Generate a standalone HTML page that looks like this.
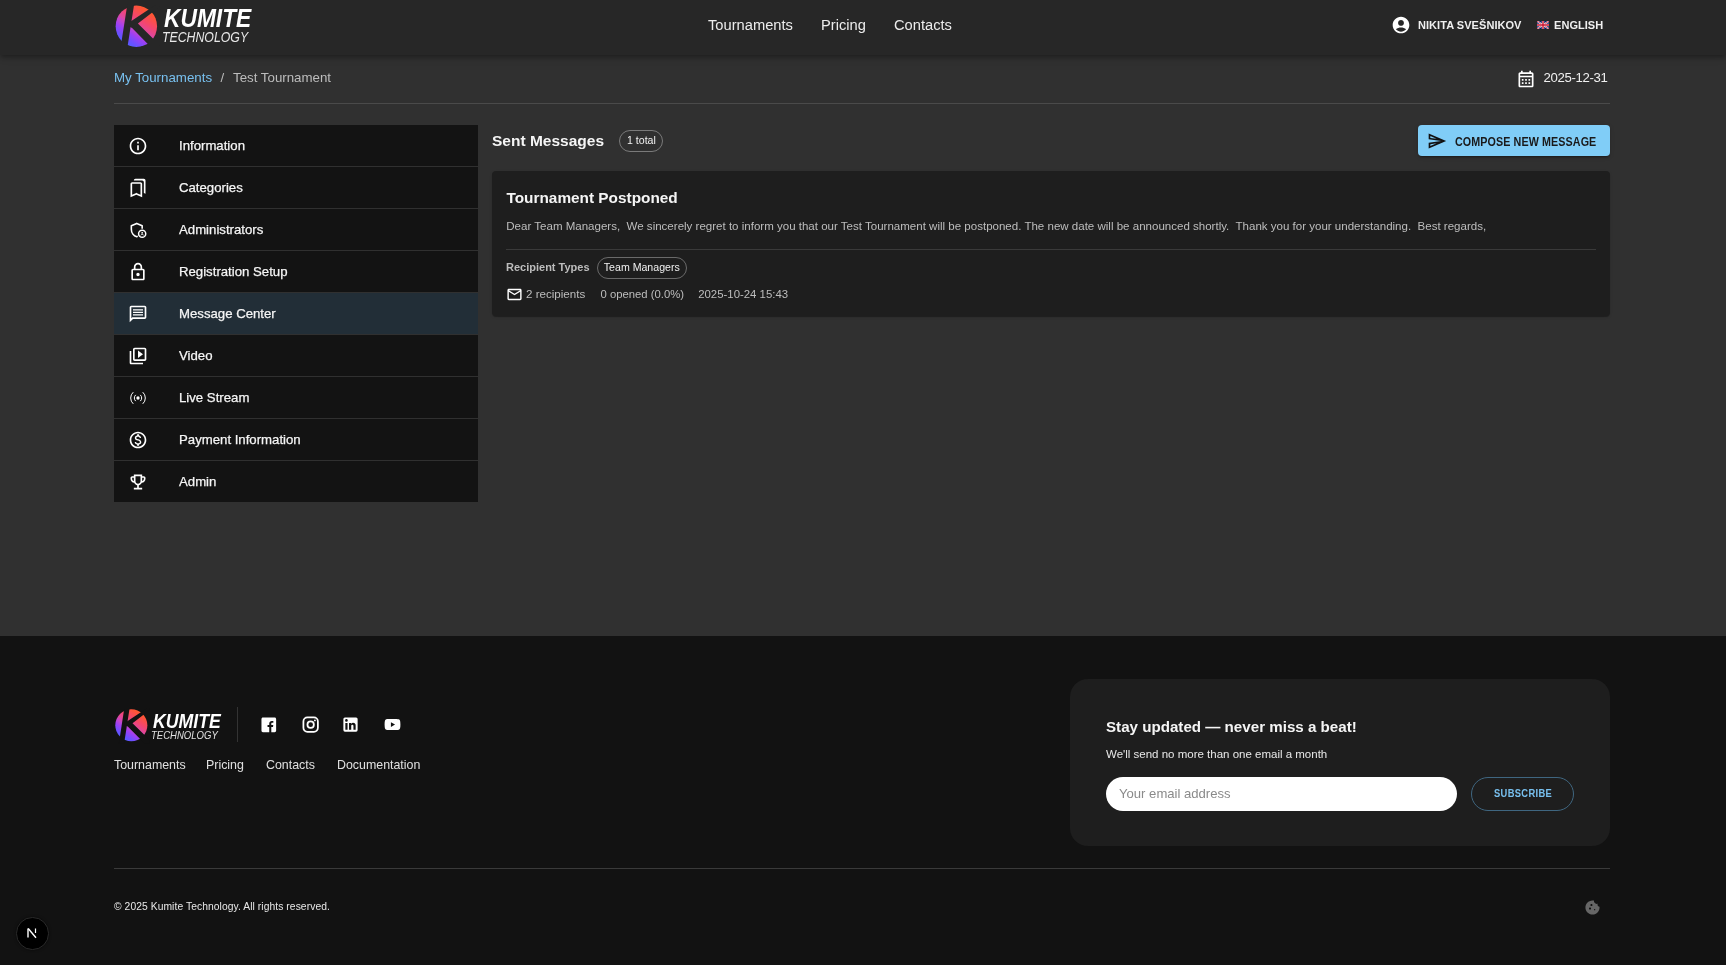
<!DOCTYPE html>
<html><head><meta charset="utf-8">
<style>
*{box-sizing:border-box;margin:0;padding:0}
html,body{width:1726px;height:965px;overflow:hidden;background:#121212;-webkit-font-smoothing:antialiased;font-family:"Liberation Sans",sans-serif;color:#fff}
.abs{position:absolute;white-space:nowrap;line-height:1}
#header{will-change:transform;position:absolute;left:0;top:0;width:1726px;height:55px;background:#272727;box-shadow:0 2px 4px -1px rgba(0,0,0,.2),0 4px 5px 0 rgba(0,0,0,.14),0 1px 10px 0 rgba(0,0,0,.12);z-index:2}
#mainbg{position:absolute;left:0;top:55px;width:1726px;height:581px;background:#303030}
#main{will-change:transform;position:absolute;left:0;top:56px;width:1726px;height:580px}
#footer{will-change:transform;position:absolute;left:0;top:636px;width:1726px;height:329px;background:#121212}
.nav{position:absolute;top:17.7px;font-size:14.7px;color:#ececec;white-space:nowrap;line-height:1}
.up{font-size:11px;font-weight:bold;letter-spacing:.05px;color:#f0f0f0}
.side{position:absolute;left:114px;top:69px;width:364px}
.item{position:relative;height:41px;background:#131313;margin-bottom:1px}
.item.act{background:#222e37}
.item svg{position:absolute;left:128px;top:11px}
.item .t{position:absolute;left:65px;top:14px;font-size:13.2px;color:#f5f5f5;-webkit-text-stroke:.25px #f5f5f5;line-height:1;white-space:nowrap}
.ic{fill:#fff}
</style></head><body>
<div id="header">
  <svg class="abs" style="left:114px;top:4px" width="46" height="46" viewBox="114 4 46 46">
    <defs><linearGradient id="lg1" gradientUnits="userSpaceOnUse" x1="148" y1="8" x2="121.85" y2="47.2"><stop offset="0" stop-color="#ff5a2e"/><stop offset="0.08" stop-color="#ff5535"/><stop offset="0.3" stop-color="#f4466e"/><stop offset="0.45" stop-color="#e0479e"/><stop offset="0.55" stop-color="#c046d0"/><stop offset="0.65" stop-color="#9c40f5"/><stop offset="0.8" stop-color="#6a50ff"/><stop offset="1" stop-color="#3f6cff"/></linearGradient></defs>
    <circle cx="136.35" cy="26.25" r="20.7" fill="url(#lg1)"/>
    <polygon points="128,0 134.8,0 127,50 120.2,50" fill="#272727"/>
    <polygon points="128,23 132.1,20.4 160,2 160,6.6 137.9,23.6 160,45.4 160,56.4 132.1,28.1 128,26" fill="#272727"/>
  </svg>
  <div class="abs" style="left:164px;top:6px;font-size:25.6px;font-weight:bold;font-style:italic;color:#fff;transform:scaleX(.89);transform-origin:0 0">KUMITE</div>
  <div class="abs" style="left:162px;top:30px;font-size:14.3px;font-style:italic;color:#e8e8e8;transform:scaleX(.86);transform-origin:0 0">TECHNOLOGY</div>
  <div class="nav" style="left:708px">Tournaments</div>
  <div class="nav" style="left:821px">Pricing</div>
  <div class="nav" style="left:894px">Contacts</div>
  <svg class="abs" style="left:1390.6px;top:15.4px" width="20" height="20" viewBox="0 0 24 24"><path class="ic" d="M12 2C6.48 2 2 6.48 2 12s4.48 10 10 10 10-4.48 10-10S17.52 2 12 2zm0 4c1.93 0 3.5 1.57 3.5 3.5S13.93 13 12 13s-3.5-1.57-3.5-3.5S10.07 6 12 6zm0 14c-2.03 0-4.43-.82-6.14-2.88C7.55 15.8 9.68 15 12 15s4.45.8 6.14 2.12C16.43 19.18 14.03 20 12 20z"/></svg>
  <div class="abs up" style="left:1418px;top:19.6px">NIKITA SVEŠNIKOV</div>
  <svg class="abs" style="left:1537px;top:20.7px" width="12" height="8" viewBox="0 0 60 40">
    <rect width="60" height="40" fill="#012169"/>
    <path d="M0,0 L60,40 M60,0 L0,40" stroke="#fff" stroke-width="8"/>
    <path d="M0,0 L60,40 M60,0 L0,40" stroke="#C8102E" stroke-width="4"/>
    <path d="M30,0 V40 M0,20 H60" stroke="#fff" stroke-width="12"/>
    <path d="M30,0 V40 M0,20 H60" stroke="#C8102E" stroke-width="7"/>
  </svg>
  <div class="abs up" style="left:1554px;top:19.6px">ENGLISH</div>
</div>
<div id="mainbg"></div>
<div id="main">
  <div class="abs" style="left:114px;top:15.3px;font-size:13.3px;color:#78c0ef">My Tournaments</div>
  <div class="abs" style="left:220.5px;top:15.3px;font-size:13.3px;color:#bdbdbd">/</div>
  <div class="abs" style="left:233px;top:15.3px;font-size:13.3px;color:#bdbdbd">Test Tournament</div>
  <svg class="abs" style="left:1516px;top:12.5px" width="20" height="20" viewBox="0 0 24 24"><path class="ic" d="M19 4h-1V2h-2v2H8V2H6v2H5c-1.11 0-1.99.9-1.99 2L3 20c0 1.1.89 2 2 2h14c1.1 0 2-.9 2-2V6c0-1.1-.9-2-2-2zm0 16H5V10h14v10zm0-12H5V6h14v2zM9 14H7v-2h2v2zm4 0h-2v-2h2v2zm4 0h-2v-2h2v2zm-8 4H7v-2h2v2zm4 0h-2v-2h2v2zm4 0h-2v-2h2v2z"/></svg>
  <div class="abs" style="left:1543.5px;top:15.2px;font-size:13.2px;letter-spacing:-.35px;color:#f0f0f0">2025-12-31</div>
  <div class="abs" style="left:114px;top:47px;width:1496px;height:1px;background:#4a4a4a"></div>
  <div class="side">
    <div class="item"><svg width="20" height="20" viewBox="0 0 24 24" style="left:14px;top:11px"><path class="ic" d="M11 7h2v2h-2zm0 4h2v6h-2zm1-9C6.48 2 2 6.48 2 12s4.48 10 10 10 10-4.48 10-10S17.52 2 12 2zm0 18c-4.41 0-8-3.590-8-8s3.59-8 8-8 8 3.59 8 8-3.59 8-8 8z"/></svg><div class="t">Information</div></div>
    <div class="item"><svg width="20" height="20" viewBox="0 0 24 24" style="left:14px;top:11px"><path class="ic" d="M19 18l2 1V3c0-1.1-.9-2-2-2H8.99C7.89 1 7 1.9 7 3h10c1.1 0 2 .9 2 2v13zM15 5H5c-1.1 0-2 .9-2 2v16l7-3 7 3V7c0-1.1-.9-2-2-2zm0 14.97l-4.21-1.81-.79-.34-.79.34L5 19.97V7h10v12.97z"/></svg><div class="t">Categories</div></div>
    <div class="item"><svg width="20" height="20" viewBox="0 0 24 24" style="left:14px;top:11px"><path d="M17 10.6V6.9L10.5 4.1 4 6.9v4.3c0 4.1 2.8 7.9 6.5 8.8.4-.1.8-.25 1.2-.4" fill="none" stroke="#fff" stroke-width="1.9" stroke-linejoin="round"/><circle cx="17" cy="16.5" r="4.3" fill="none" stroke="#fff" stroke-width="1.8"/><circle cx="17" cy="15.4" r="1.1" fill="#fff"/><path d="M15.1 18.3c.4-.7 1.1-1 1.9-1s1.5.3 1.9 1" fill="none" stroke="#fff" stroke-width="1"/></svg><div class="t">Administrators</div></div>
    <div class="item"><svg width="20" height="20" viewBox="0 0 24 24" style="left:14px;top:11px"><path class="ic" d="M18 8h-1V6c0-2.76-2.24-5-5-5S7 3.24 7 6v2H6c-1.1 0-2 .9-2 2v10c0 1.1.9 2 2 2h12c1.1 0 2-.9 2-2V10c0-1.1-.9-2-2-2zM9 6c0-1.66 1.34-3 3-3s3 1.34 3 3v2H9V6zm9 14H6V10h12v10zm-6-3c1.1 0 2-.9 2-2s-.9-2-2-2-2 .9-2 2 .9 2 2 2z"/></svg><div class="t">Registration Setup</div></div>
    <div class="item act"><svg width="20" height="20" viewBox="0 0 24 24" style="left:14px;top:11px"><path class="ic" d="M20 2H4c-1.1 0-1.99.9-1.99 2L2 22l4-4h14c1.1 0 2-.9 2-2V4c0-1.1-.9-2-2-2zm0 14H5.17L4 17.17V4h16v12zM6 12.2h12v1.6H6zm0-3h12v1.6H6zm0-3h12v1.6H6z"/></svg><div class="t">Message Center</div></div>
    <div class="item"><svg width="20" height="20" viewBox="0 0 24 24" style="left:14px;top:11px"><path class="ic" d="M4 6H2v14c0 1.1.9 2 2 2h14v-2H4V6zm16-4H8c-1.1 0-2 .9-2 2v12c0 1.1.9 2 2 2h12c1.1 0 2-.9 2-2V4c0-1.1-.9-2-2-2zm0 14H8V4h12v12zM12 5.5v9l6-4.5z"/></svg><div class="t">Video</div></div>
    <div class="item"><svg width="20" height="20" viewBox="0 0 24 24" style="left:14px;top:11px"><path d="M15.08 8.58A4.6 4.6 0 0 1 15.08 15.42 M8.92 8.58A4.6 4.6 0 0 0 8.92 15.42 M18.02 5.31A9.0 9.0 0 0 1 18.02 18.69 M5.98 5.31A9.0 9.0 0 0 0 5.98 18.69" fill="none" stroke="#fff" stroke-width="1.2" stroke-linecap="round"/><circle cx="12" cy="12" r="2" fill="#fff"/></svg><div class="t">Live Stream</div></div>
    <div class="item"><svg width="20" height="20" viewBox="0 0 24 24" style="left:14px;top:11px"><path class="ic" d="M12 2C6.48 2 2 6.48 2 12s4.48 10 10 10 10-4.48 10-10S17.52 2 12 2zm0 18c-4.41 0-8-3.59-8-8s3.59-8 8-8 8 3.59 8 8-3.59 8-8 8zm.31-8.86c-1.77-.45-2.34-.94-2.34-1.67 0-.84.79-1.43 2.1-1.430 1.38 0 1.9.66 1.94 1.64h1.71c-.05-1.34-.87-2.57-2.49-2.97V5H10.9v1.69c-1.51.32-2.72 1.3-2.72 2.810 0 1.79 1.49 2.69 3.66 3.21 1.950.46 2.34 1.15 2.34 1.870 0 .53-.39 1.39-2.1 1.39-1.6 0-2.23-.72-2.32-1.64H8.04c.1 1.7 1.36 2.66 2.86 2.97V19h2.34v-1.67c1.52-.29 2.72-1.16 2.73-2.77-.01-2.2-1.9-2.96-3.66-3.42z"/></svg><div class="t">Payment Information</div></div>
    <div class="item" style="margin-bottom:0"><svg width="20" height="20" viewBox="0 0 24 24" style="left:14px;top:11px"><path class="ic" d="M19 5h-2V3H7v2H5c-1.1 0-2 .9-2 2v1c0 2.55 1.92 4.63 4.39 4.94.63 1.5 1.98 2.63 3.61 2.96V19H7v2h10v-2h-4v-3.1c1.63-.33 2.98-1.46 3.61-2.96C19.08 12.63 21 10.55 21 8V7c0-1.1-.9-2-2-2zM5 8V7h2v3.82C5.840 10.4 5 9.3 5 8zm7 6c-1.65 0-3-1.35-3-3V5h6v6c0 1.65-1.35 3-3 3zm7-6c0 1.3-.84 2.4-2 2.82V7h2v1z"/></svg><div class="t">Admin</div></div>
  </div>
  <div class="abs" style="left:492px;top:77.2px;font-size:15.5px;font-weight:bold;color:#f5f5f5">Sent Messages</div>
  <div class="abs" style="left:619px;top:74px;width:44px;height:21.5px;border:1px solid #7a7a7a;border-radius:11px"></div>
  <div class="abs" style="left:627px;top:79.2px;font-size:10.6px;color:#f0f0f0">1 total</div>
  <div class="abs" style="left:1418px;top:69px;width:192px;height:31px;background:#80cdf7;border-radius:4px;box-shadow:0 3px 1px -2px rgba(0,0,0,.2),0 2px 2px 0 rgba(0,0,0,.14),0 1px 5px 0 rgba(0,0,0,.12)">
    <svg class="abs" style="left:9px;top:6px" width="20" height="20" viewBox="0 0 24 24"><path fill="#111" d="M4.01 6.03l7.51 3.22-7.52-1 .01-2.22m7.5 8.72L4 17.97v-2.22l7.51-1M2.01 3L2 10l15 2-15 2 .01 7L23 12 2.01 3z"/></svg>
    <div class="abs" style="left:36.7px;top:10.5px;font-size:12px;font-weight:bold;letter-spacing:.1px;color:#1a1a1a;transform:scaleX(.895);transform-origin:0 0">COMPOSE NEW MESSAGE</div>
  </div>
  <div class="abs" style="left:492px;top:115px;width:1118px;height:145px;background:#1e1e1e;border-radius:4px;box-shadow:0 2px 1px -1px rgba(0,0,0,.2),0 1px 1px 0 rgba(0,0,0,.14),0 1px 3px 0 rgba(0,0,0,.12)">
    <div class="abs" style="left:14.5px;top:19.2px;font-size:15.36px;font-weight:bold;color:#f5f5f5">Tournament Postponed</div>
    <div class="abs" style="left:14.3px;top:49.8px;font-size:11.54px;color:#bdbdbd">Dear Team Managers,&nbsp; We sincerely regret to inform you that our Test Tournament will be postponed. The new date will be announced shortly.&nbsp; Thank you for your understanding.&nbsp; Best regards,</div>
    <div class="abs" style="left:14px;top:77.5px;width:1090px;height:1px;background:#3a3a3a"></div>
    <div class="abs" style="left:14px;top:91px;font-size:11px;font-weight:bold;color:#bdbdbd">Recipient Types</div>
    <div class="abs" style="left:105px;top:86px;width:89.7px;height:22px;border:1px solid #6a6a6a;border-radius:11px"></div>
    <div class="abs" style="left:111.8px;top:91.2px;font-size:10.6px;color:#f0f0f0">Team Managers</div>
    <svg class="abs" style="left:13.5px;top:114.8px" width="17" height="17" viewBox="0 0 24 24"><path class="ic" d="M20 4H4c-1.1 0-1.99.9-1.99 2L2 18c0 1.1.9 2 2 2h16c1.1 0 2-.9 2-2V6c0-1.1-.9-2-2-2zm0 14H4V8l8 5 8-5v10zm-8-7L4 6h16l-8 5z"/></svg>
    <div class="abs" style="left:34px;top:117.2px;font-size:11.6px;color:#bdbdbd">2 recipients</div>
    <div class="abs" style="left:108.5px;top:117.8px;font-size:11.3px;color:#bdbdbd">0 opened (0.0%)</div>
    <div class="abs" style="left:206.2px;top:117.8px;font-size:11.4px;color:#bdbdbd">2025-10-24 15:43</div>
  </div>
</div>
<div id="footer">
  <svg class="abs" style="left:114px;top:72px;width:46px;height:46px;transform:scale(.775);transform-origin:0 0" width="46" height="46" viewBox="114 4 46 46">
    <circle cx="136.35" cy="26.25" r="20.7" fill="url(#lg1)"/>
    <polygon points="128,0 134.8,0 127,50 120.2,50" fill="#121212"/>
    <polygon points="128,23 132.1,20.4 160,2 160,6.6 137.9,23.6 160,45.4 160,56.4 132.1,28.1 128,26" fill="#121212"/>
  </svg>
  <div class="abs" style="left:153px;top:76px;font-size:19.9px;font-weight:bold;font-style:italic;color:#fff;transform:scaleX(.89);transform-origin:0 0">KUMITE</div>
  <div class="abs" style="left:151px;top:94px;font-size:11.1px;font-style:italic;color:#e0e0e0;transform:scaleX(.86);transform-origin:0 0">TECHNOLOGY</div>
  <div class="abs" style="left:236.5px;top:71px;width:1px;height:35px;background:#333"></div>
  <svg class="abs" style="left:259.9px;top:79.7px" width="17.6" height="17.6" viewBox="0 0 24 24"><path class="ic" d="M20 2H4c-1.1 0-2 .9-2 2v16c0 1.1.9 2 2 2h8.61v-6.97h-2.34V12.3h2.34v-2c0-2.33 1.42-3.6 3.5-3.6.7 0 1.39.04 2.09.11v2.42h-1.43c-1.13 0-1.35.53-1.35 1.32v1.73h2.69l-.35 2.73h-2.34V22H20c1.1 0 2-.9 2-2V4c0-1.1-.9-2-2-2z"/></svg>
  <svg class="abs" style="left:300.7px;top:79.3px" width="19.3" height="19.3" viewBox="0 0 24 24"><rect x="3" y="3" width="18" height="18" rx="5" fill="none" stroke="#fff" stroke-width="2.2"/><circle cx="12" cy="12" r="4" fill="none" stroke="#fff" stroke-width="2.2"/><circle cx="17.3" cy="6.7" r="1.2" fill="#fff"/></svg>
  <svg class="abs" style="left:341px;top:79px" width="19" height="19" viewBox="0 0 24 24"><path class="ic" d="M19 3a2 2 0 0 1 2 2v14a2 2 0 0 1-2 2H5a2 2 0 0 1-2-2V5a2 2 0 0 1 2-2h14m-.5 15.5v-5.3a3.26 3.26 0 0 0-3.26-3.26c-.85 0-1.84.52-2.32 1.3v-1.11h-2.79v8.37h2.79v-4.93c0-.77.62-1.4 1.39-1.4a1.4 1.4 0 0 1 1.4 1.4v4.93h2.79M6.88 8.56a1.68 1.68 0 0 0 1.68-1.680c0-.93-.75-1.69-1.68-1.69a1.69 1.69 0 0 0-1.69 1.69c0 .93.76 1.68 1.69 1.68m1.39 9.94v-8.37H5.5v8.37h2.77z"/></svg>
  <svg class="abs" style="left:382.6px;top:79px" width="19" height="19" viewBox="0 0 24 24"><path class="ic" d="M10 15l5.19-3L10 9v6m11.56-7.83c.13.47.22 1.1.28 1.9.07.8.1 1.49.1 2.09L22 12c0 2.19-.16 3.8-.44 4.83-.25.9-.83 1.48-1.73 1.73-.47.13-1.33.22-2.65.28-1.3.07-2.49.1-3.59.1L12 19c-4.19 0-6.8-.16-7.830-.44-.9-.25-1.48-.83-1.73-1.73-.13-.47-.22-1.1-.28-1.9-.07-.8-.1-1.49-.1-2.09L2 12c0-2.19.16-3.8.44-4.83.25-.9.83-1.48 1.73-1.73.47-.13 1.33-.22 2.65-.28 1.3-.07 2.49-.1 3.59-.1L12 5c4.19 0 6.8.16 7.83.44.9.25 1.48.83 1.73 1.73z"/></svg>
  <div class="abs" style="left:114px;top:123px;font-size:12.4px;color:#e0e0e0">Tournaments</div>
  <div class="abs" style="left:206px;top:123px;font-size:12.4px;color:#e0e0e0">Pricing</div>
  <div class="abs" style="left:266px;top:123px;font-size:12.4px;color:#e0e0e0">Contacts</div>
  <div class="abs" style="left:337px;top:123px;font-size:12.4px;color:#e0e0e0">Documentation</div>
  <div class="abs" style="left:1070px;top:43px;width:540px;height:167px;background:#1e1e1e;border-radius:18px"></div>
  <div class="abs" style="left:1106px;top:83.3px;font-size:15.15px;font-weight:bold;color:#f5f5f5">Stay updated — never miss a beat!</div>
  <div class="abs" style="left:1106px;top:112.8px;font-size:11.5px;color:#e8e8e8">We'll send no more than one email a month</div>
  <div class="abs" style="left:1106px;top:141px;width:351px;height:34px;background:#fff;border-radius:17px"></div>
  <div class="abs" style="left:1119px;top:151.3px;font-size:13.1px;color:#8a8a8a">Your email address</div>
  <div class="abs" style="left:1471px;top:141px;width:103px;height:34px;border:1px solid #3f6680;border-radius:17px"></div>
  <div class="abs" style="left:1494px;top:152px;font-size:11px;font-weight:bold;letter-spacing:.4px;color:#78c0ef;transform:scaleX(.85);transform-origin:0 0">SUBSCRIBE</div>
  <div class="abs" style="left:114px;top:232px;width:1496px;height:1px;background:#3a3a3a"></div>
  <div class="abs" style="left:114px;top:266px;font-size:10.3px;letter-spacing:.07px;color:#e8e8e8">© 2025 Kumite Technology. All rights reserved.</div>
  <svg class="abs" style="left:1584px;top:263px" width="17" height="17" viewBox="0 0 24 24"><path fill="#666" d="M21.95 10.99c-1.79-.03-3.7-1.95-2.68-4.22-2.98 1-5.77-1.59-5.19-4.56C6.95.71 2 6.58 2 12c0 5.52 4.48 10 10 10 5.89 0 10.54-5.08 9.95-11.01zM8.5 15c-.83 0-1.5-.67-1.5-1.5S7.67 12 8.5 12s1.5.67 1.5 1.5S9.33 15 8.5 15zm2-5C9.67 10 9 9.33 9 8.5S9.67 7 10.5 7s1.5.67 1.5 1.5-.67 1.5-1.5 1.5zm4.5 6c-.55 0-1-.45-1-1s.45-1 1-1 1 .45 1 1-.45 1-1 1z"/></svg>
  <div class="abs" style="left:16px;top:281px;width:32.5px;height:32.5px;border-radius:50%;background:#000;border:1.5px solid #2a2a2a;box-shadow:0 0 3px rgba(0,0,0,.5)"></div>
  <svg class="abs" style="left:24px;top:289px" width="16" height="16" viewBox="0 0 16 16"><path d="M4 3.5V12.5" stroke="#fff" stroke-width="1.4"/><path d="M4.2 3.5L12 12.8" stroke="#fff" stroke-width="1.4"/><path d="M11.5 3.5V8" stroke="#fff" stroke-width="1.2"/></svg>
</div>
</body></html>
